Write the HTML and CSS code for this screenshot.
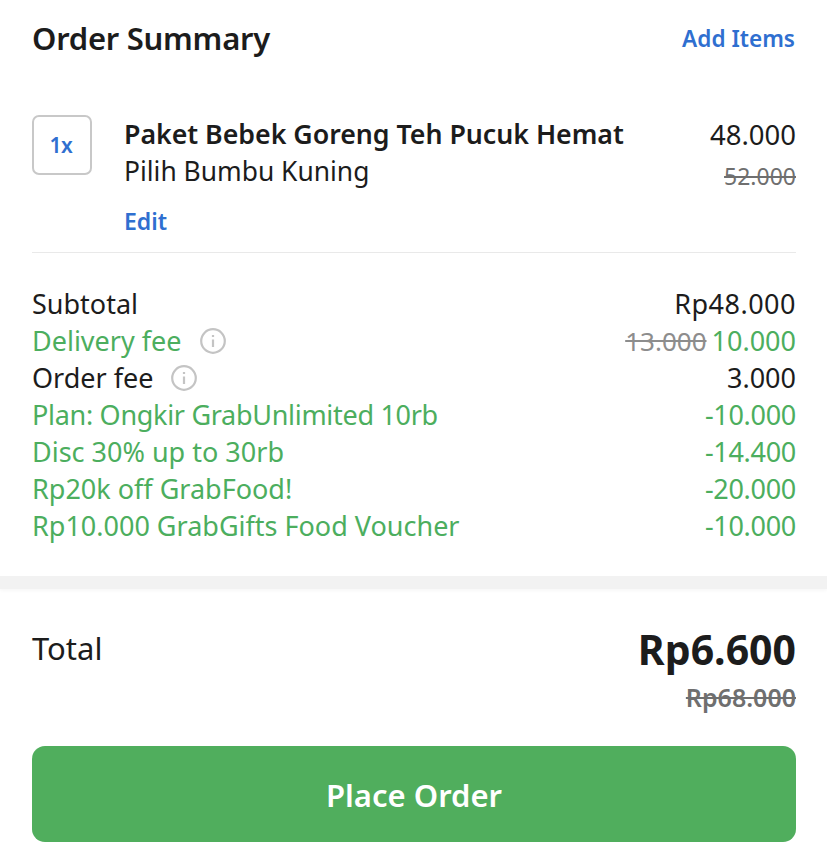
FILE: index.html
```html
<!DOCTYPE html>
<html lang="id">
<head>
<meta charset="utf-8">
<title>Order Summary</title>
<link rel="stylesheet" href="styles.css">
</head>
<body>
<main class="page">
  <section class="summary">
    <header class="head">
      <h1 class="title">Order Summary</h1>
      <a class="add">Add Items</a>
    </header>
    <div class="item">
      <div class="qty">1x</div>
      <div class="info">
        <div class="name">Paket Bebek Goreng Teh Pucuk Hemat</div>
        <div class="option">Pilih Bumbu Kuning</div>
        <a class="edit">Edit</a>
      </div>
      <div class="prices">
        <div class="price">48.000</div>
        <div class="oldprice">52.000</div>
      </div>
    </div>
    <div class="fees">
      <div class="row"><span>Subtotal</span><span class="wide">Rp48.000</span></div>
      <div class="row green"><span class="label">Delivery fee
        <svg class="info-icon" viewBox="0 0 26 26"><circle cx="13" cy="13" r="11.8"/><path d="M13 11.5v7.5M13 7v2"/></svg></span>
        <span><s class="strike">13.000</s> 10.000</span></div>
      <div class="row"><span class="label">Order fee
        <svg class="info-icon" viewBox="0 0 26 26"><circle cx="13" cy="13" r="11.8"/><path d="M13 11.5v7.5M13 7v2"/></svg></span>
        <span>3.000</span></div>
      <div class="row green"><span class="tight">Plan: Ongkir GrabUnlimited 10rb</span><span class="minus">-10.000</span></div>
      <div class="row green"><span>Disc 30% up to 30rb</span><span class="minus">-14.400</span></div>
      <div class="row green"><span>Rp20k off GrabFood!</span><span class="minus">-20.000</span></div>
      <div class="row green"><span>Rp10.000 GrabGifts Food Voucher</span><span class="minus">-10.000</span></div>
    </div>
  </section>
  <div class="band"></div>
  <section class="checkout">
    <div class="total">
      <span class="total-label">Total</span>
      <div class="total-values">
        <div class="total-now">Rp6.600</div>
        <div class="total-old">Rp68.000</div>
      </div>
    </div>
    <button class="place">Place Order</button>
  </section>
</main>
</body>
</html>
```
FILE: styles.css
```css
* { box-sizing: border-box; }
html, body { margin: 0; padding: 0; background: #fff; }
body {
  font-family: "Noto Sans", "Open Sans", sans-serif;
  color: #1c1c1c;
  width: 827px;
  height: 862px;
  overflow: hidden;
}
.page { display: flex; flex-direction: column; }
.summary { padding: 0 31px 0 32px; height: 576px; }
.head {
  display: flex; justify-content: space-between; align-items: center;
  padding-top: 17px; height: 60px; padding-right: 1px;
}
.title { margin: 0 0 2px; font-size: 31px; font-weight: 600; line-height: 42px; letter-spacing: -0.25px; }
.add { font-size: 22.6px; font-weight: 600; color: #2f6fd0; line-height: 42px; }
.item {
  display: flex; margin-top: 55px; height: 138px;
  border-bottom: 1px solid #e9e9e9;
}
.qty {
  width: 60px; height: 60px; border: 2px solid #c8c8c8; border-radius: 7px;
  display: flex; align-items: center; justify-content: center;
  color: #2f6fd0; font-size: 21px; font-weight: 600; margin-right: 32px; flex: none;
  letter-spacing: -0.5px; padding-right: 2px;
}
.info { flex: 1; }
.name { font-size: 26.75px; font-weight: 600; line-height: 38px; letter-spacing: -0.03px; }
.option { font-size: 26.4px; line-height: 36px; }
.edit { display: block; font-size: 23px; font-weight: 600; color: #2f6fd0; line-height: 32px; margin-top: 16px; }
.prices { text-align: right; }
.price { font-size: 27.5px; line-height: 40px; }
.oldprice { font-size: 23px; line-height: 36px; margin-top: 3px; color: #6f6f6f; text-decoration: line-through; }
.fees { padding-top: 32px; }
.row { display: flex; justify-content: space-between; font-size: 27px; line-height: 37px; height: 37px; }
.green { color: #4cae5e; }
.wide { letter-spacing: 0.5px; }
.tight { letter-spacing: -0.3px; }
.minus { letter-spacing: -0.3px; }
.label { display: flex; align-items: center; }
.info-icon { width: 26px; height: 26px; margin-left: 18px; fill: none; stroke: #c4c4c4; stroke-width: 2.2; }
.strike { color: #8d8d8d; font-size: 26px; margin-right: -2px; }
.band {
  height: 13px; background: #f2f2f2;
  box-shadow: 0 2px 3px rgba(0,0,0,0.03);
}
.checkout { padding: 0 31px 0 32px; }
.total { display: flex; justify-content: space-between; height: 157px; }
.total-label { font-size: 31px; line-height: 42px; margin-top: 38px; }
.total-values { text-align: right; }
.total-now { font-size: 41px; font-weight: 700; line-height: 52px; margin-top: 34px; }
.total-old { font-size: 25px; font-weight: 600; line-height: 34px; margin-top: 5px; color: #6f6f6f; text-decoration: line-through; }
.place {
  display: block; width: 100%; height: 96px; border: 0; border-radius: 13px; padding: 2px 0 0;
  background: #50ae5d; color: #fff; font: 600 31px "Noto Sans", sans-serif;
}
```
